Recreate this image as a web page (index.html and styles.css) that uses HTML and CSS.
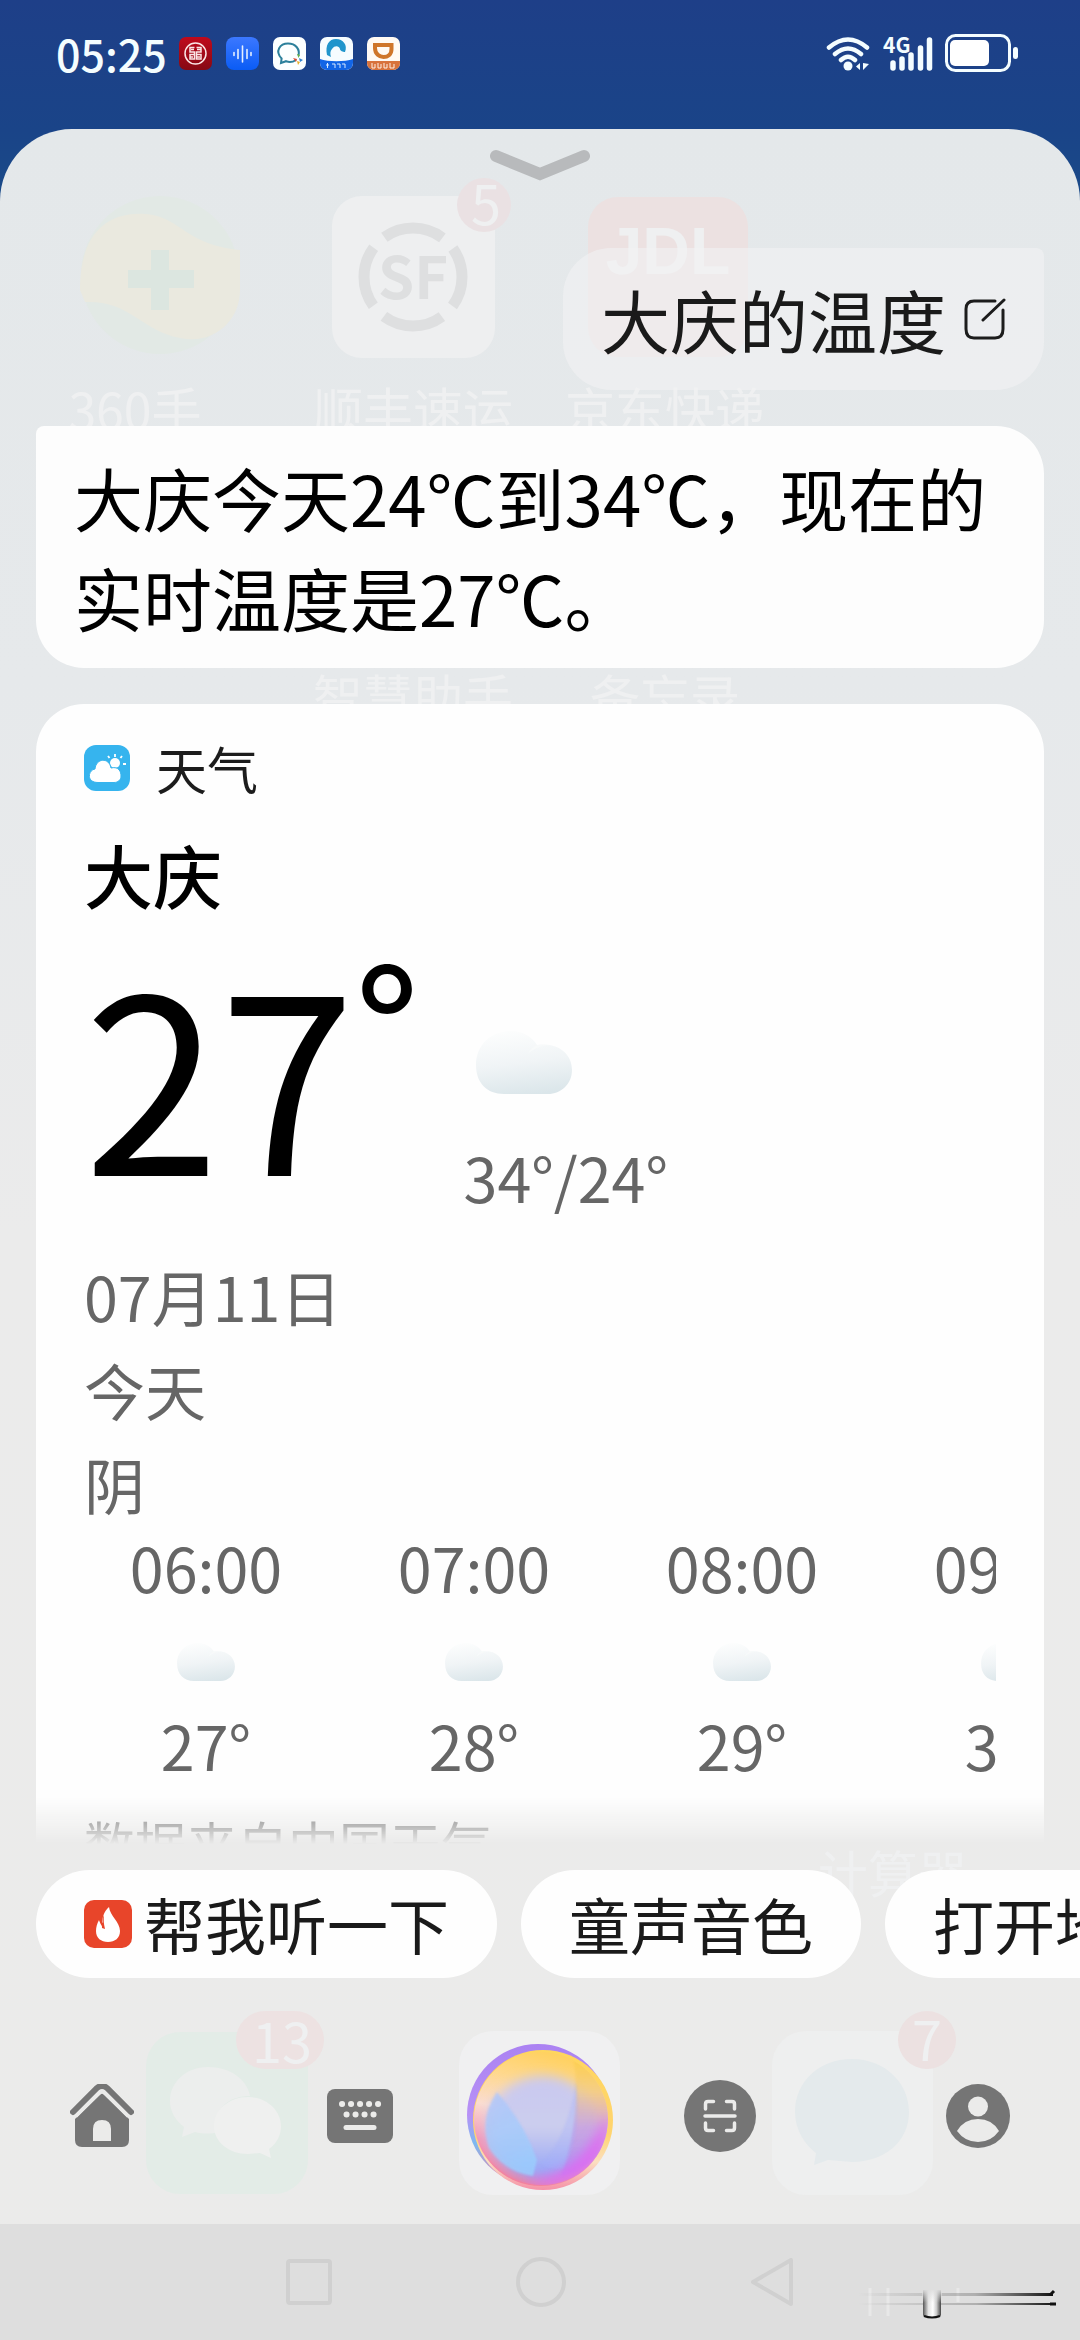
FILE: index.html
```html
<!DOCTYPE html>
<html lang="zh-CN">
<head>
<meta charset="utf-8">
<meta name="viewport" content="width=device-width, initial-scale=1">
<title>大庆的温度</title>
<link rel="stylesheet" href="styles.css">
</head>
<body>
<svg class="defs" width="0" height="0" aria-hidden="true">
  <defs>
    <linearGradient id="cloud-fill" x1="0.4" y1="0" x2="0.6" y2="1">
      <stop offset="0" stop-color="#fcfdfd"/>
      <stop offset="0.5" stop-color="#f0f4f6"/>
      <stop offset="1" stop-color="#dbe6ea"/>
    </linearGradient>
    <symbol id="cloud" viewBox="0 0 96 63">
      <path d="M28 63C11 63 0 52 0 34C0 14 15 0 35 0C47 0 56 6 61 14C81 11 96 22 96 39C96 53 85 63 72 63Z" fill="url(#cloud-fill)"/>
      <path d="M61 14C57 16 54 19 52 23C55 19 66 13 76 15Z" fill="#f8fafa"/>
    </symbol>
  </defs>
</svg>

<header class="status">
  <time class="clock">05:25</time>
  <div class="apps">
    <svg class="app" viewBox="0 0 33 33"><defs><linearGradient id="red" x2="0" y2="1"><stop stop-color="#c00a1c"/><stop offset="1" stop-color="#860914"/></linearGradient></defs><rect width="33" height="33" rx="7" fill="url(#red)"/><g fill="none" stroke="#fbe6e6" stroke-width="1.5"><circle cx="16.500" cy="16.500" r="10.500"/><path d="M15.500 10.500H11v4.500h4.500v2.500H11V22h4.500V17M17.500 10.500H22v4.500h-4.500v2.500H22V22h-4.500V17M12 12.500h3M18 12.500h4M11 20h3M18 20h3"/></g></svg>
    <svg class="app" viewBox="0 0 33 33"><defs><linearGradient id="blue" x2="0" y2="1"><stop stop-color="#3c78ff"/><stop offset="1" stop-color="#0a5cf5"/></linearGradient></defs><rect width="33" height="33" rx="8" fill="url(#blue)"/><path d="M8 15.500v3M12 12.500v9M16.500 9v16M21 12.500v9M25 15.500v3" stroke="#e4efff" stroke-width="1.600" stroke-linecap="round"/></svg>
    <svg class="app" viewBox="0 0 33 33"><rect width="33" height="33" rx="7" fill="#fcffff"/><path d="M23 23c-3 2-7 2.500-10 1.200L8 26l.6-4.500C1.500 14 7 6.500 15 6.500s12 6 10.500 12" fill="none" stroke="#2c809b" stroke-width="2"/><path d="M24 17l3 1-1.500 3z" fill="#69b345"/><path d="M26 21l4 2-3 2z" fill="#3283cf"/><path d="M20 21l4 1-1 3z" fill="#d84c32"/><path d="M24 24l3 1-2 3z" fill="#e8b027"/></svg>
    <svg class="app" viewBox="0 0 33 33"><rect width="33" height="33" rx="7" fill="#f6fcff"/><path d="M7 18C5 8 9 2 16 2s12 6 9 13c-2 0-5-1-5-3-1-3-5-4-8 0-2 2-2 5-1 8z" fill="#2095cc"/><path d="M0 22c8 3 25 3 33 0v4a7 7 0 0 1-7 7H7a7 7 0 0 1-7-7z" fill="#1265e6"/><path d="M6 28h3M7.500 26v5M12 27h3v4M17 27h3v4M22 27h3v4" fill="none" stroke="#d8eaff"/></svg>
    <svg class="app" viewBox="0 0 33 33"><rect width="33" height="33" rx="7" fill="#fffaf4"/><path d="M8 8h16.500v4c0 6-4 8-8 8s-8.500-3-8.500-9z" fill="none" stroke="#cf762a" stroke-width="4"/><path d="M0 24h33v2a7 7 0 0 1-7 7H7a7 7 0 0 1-7-7z" fill="#d8733c"/><path d="M5 26v5h3v-4M11 26v5h3v-4M17 26v5h3v-4M23 26v5h4v-4" fill="none" stroke="#fff0e4"/></svg>
  </div>
  <div class="signals">
    <svg class="wifi" viewBox="0 0 45 35"><g fill="none" stroke="#f4fdff" stroke-width="4.500" stroke-linecap="round"><path d="M3 11.500q19-16 38 0M9 18q13-11 26 0M15 24q7-6.500 14 0"/></g><circle cx="22" cy="30" r="4.500" fill="#f4fdff"/><path d="M34 27v7l-4-3.500zM37 27v7l6-6z" fill="#f4fdff"/></svg>
    <svg class="cell" viewBox="0 0 50 35"><text x="0" y="17" class="net">4G</text><path d="M10 27v5M19 23v9M28 19v13M37.500 12v20M46.500 4v28" stroke="#f4fdff" stroke-width="5.500" stroke-linecap="round"/></svg>
    <svg class="battery" viewBox="0 0 73 38"><rect x="1.500" y="1.500" width="63" height="35" rx="9" fill="none" stroke="#f4fdff" stroke-width="3"/><rect x="5" y="6" width="39" height="26" rx="5" fill="#fff"/><rect x="68" y="13" width="5" height="12" rx="2.500" fill="#f4fdff"/></svg>
  </div>
</header>

<div class="sheet">
  <svg class="home-screen" viewBox="0 129 1080 2211" aria-hidden="true">
    <circle cx="160" cy="275" r="79" fill="#e2e9e5"/>
    <path d="M80 290C80 230 110 212 145 214C180 216 185 245 240 250V290C240 320 215 345 180 338C140 330 130 300 85 302Z" fill="#eae9df"/>
    <path d="M160 250v60M128 279h66" stroke="#dce6e0" stroke-width="18"/>
    <rect x="332" y="196" width="163" height="162" rx="30" fill="#eeeff0"/>
    <circle cx="413" cy="277" r="49" fill="none" stroke="#dedfe0" stroke-width="11" stroke-dasharray="62 15" stroke-dashoffset="31"/>
    <text x="413" y="299" class="ghost sf">SF</text>
    <circle cx="484" cy="205" r="27" fill="#eae1e3"/>
    <text x="486" y="225" class="ghost count">5</text>
    <rect x="588" y="197" width="160" height="160" rx="30" fill="#ece1e1"/>
    <text x="668" y="274" class="ghost jdl">JDL</text>
    <text x="135" y="430" class="ghost label">360手</text>
    <text x="413" y="430" class="ghost label">顺丰速运</text>
    <text x="665" y="430" class="ghost label">京东快递</text>
    <text x="413" y="717" class="ghost label">智慧助手</text>
    <text x="665" y="717" class="ghost label">备忘录</text>
    <text x="893" y="1893" class="ghost label">计算器</text>
    <rect x="146" y="2032" width="162" height="162" rx="34" fill="#e3ece7"/>
    <path d="M208 2067c-22 0-38 15-38 34 0 11 6 20 14 26l-2 10 13-5c8 2 17 2 22 0-4-26 14-36 33-36-3-17-20-29-42-29z" fill="#eceeed"/>
    <path d="M248 2097c-19 0-34 13-34 29s15 28 34 28l12-1 11 5-2-9c8-6 12-14 12-23 0-16-15-29-33-29z" fill="#eff0ef"/>
    <rect x="236" y="2011" width="88" height="58" rx="29" fill="#ede2e2"/>
    <text x="282" y="2063" class="ghost count">13</text>
    <rect x="459" y="2031" width="161" height="164" rx="34" fill="#f0f0f1"/>
    <rect x="772" y="2031" width="161" height="164" rx="34" fill="#eeefef"/>
    <path d="M852 2059c-33 0-57 23-57 53 0 17 9 32 21 41l-2 12 14-5 24 2c33 0 57-21 57-50s-24-53-57-53z" fill="#e4eaec"/>
    <circle cx="927" cy="2040" r="29" fill="#ece1e1"/>
    <text x="927" y="2061" class="ghost count">7</text>
  </svg>

  <button class="collapse" aria-label="收起">
    <svg class="chevron" viewBox="0 0 102 32"><path d="M7 7L51 25L95 7" fill="none" stroke="#b8babc" stroke-width="12" stroke-linecap="round"/></svg>
  </button>

  <main class="talk">
    <div class="bubble ask">
      <span>大庆的温度</span>
      <button class="edit" aria-label="编辑"><svg viewBox="0 0 42 42"><path d="M31 3H10Q2 3 2 11V31Q2 40 10 40H31Q39 40 39 31V12M40 2L19 22" fill="none" stroke="#1c1c1c" stroke-width="3" stroke-linecap="round"/></svg></button>
    </div>
    <p class="bubble reply">大庆今天24℃到34℃，现在的实时温度是27℃。</p>

    <section class="weather">
      <div class="source">
        <svg class="source-icon" viewBox="0 0 46 46"><rect width="46" height="46" rx="12" fill="#36b4ee"/><circle cx="31" cy="18" r="5" fill="#fff"/><path d="M31 9v3M38 11l-1.500 2M24 11l1.500 2M42 19h-3" stroke="#fff" stroke-width="1.800"/><path d="M14 37.500C2 37.500 4 25 11 24C12 13 25 12 27 23C35 21 37 27 37 31C37 35 34 37.500 30 37.500Z" fill="#fff" stroke="#36b4ee"/></svg>
        <span>天气</span>
      </div>
      <h1 class="city">大庆</h1>
      <div class="current">
        <div class="now">27<span class="degree">°</span></div>
        <div class="range">
          <svg class="cloud" viewBox="0 0 96 63"><use href="#cloud"/></svg>
          <span>34°/24°</span>
        </div>
      </div>
      <div class="day">
        <div>07月11日</div>
        <div>今天</div>
        <div>阴</div>
      </div>
      <ul class="hours">
        <li><span>06:00</span><svg class="small-cloud" viewBox="0 0 96 63"><use href="#cloud"/></svg><span>27°</span></li>
        <li><span>07:00</span><svg class="small-cloud" viewBox="0 0 96 63"><use href="#cloud"/></svg><span>28°</span></li>
        <li><span>08:00</span><svg class="small-cloud" viewBox="0 0 96 63"><use href="#cloud"/></svg><span>29°</span></li>
        <li><span>09:00</span><svg class="small-cloud" viewBox="0 0 96 63"><use href="#cloud"/></svg><span>30°</span></li>
      </ul>
      <p class="credit">数据来自中国天气</p>
    </section>
  </main>

  <div class="chips">
    <button class="chip"><svg class="flame" viewBox="0 0 48 48"><rect width="48" height="48" rx="10" fill="#e8452a"/><path d="M25 7C26 16 36 22 36 31C36 38 31 42 24 42C17 42 12 38 12 31C12 27 13 24 15 20C16 23 17 25 19 27C17 19 20 11 25 7Z" fill="#fff"/><path d="M15 20Q18 23 18 28L21 29Q19 21 20 15Q18 18 19 23Z" fill="#e8452a"/></svg>帮我听一下</button>
    <button class="chip">童声音色</button>
    <button class="chip">打开地图</button>
  </div>

  <nav class="tools">
    <button class="tool first" aria-label="主页"><svg width="64" height="64" viewBox="0 0 64 64"><path d="M3 28L27 4Q32 0 37 4L61 28" fill="none" stroke="#757575" stroke-width="6" stroke-linecap="round"/><path d="M32 9L59 35V56Q59 63 52 63H12Q5 63 5 56V35Z" fill="#757575"/><path d="M6 32.500L29 9.500Q32 7 35 9.500L58 32.500" fill="none" stroke="#ebebea" stroke-width="3"/><path d="M23 57V45Q23 36 32 36T41 45V57Z" fill="#ebebea"/></svg></button>
    <button class="tool" aria-label="键盘"><svg width="66" height="54" viewBox="0 0 66 54"><rect width="66" height="54" rx="8" fill="#757575"/><g stroke="#ebebea" stroke-width="6" stroke-linecap="round"><path d="M15 15h.1M24 15h.1M33 15h.1M42 15h.1M51 15h.1M19.500 25.500h.1M28.500 25.500h.1M37.500 25.500h.1M46.500 25.500h.1"/><path d="M19 38.500H47" stroke-width="5"/></g></svg></button>
    <button class="tool" aria-label="语音"><svg width="146" height="148" viewBox="0 0 146 148">
      <defs>
        <linearGradient id="rim" x1=".4" y1="0" x2=".4" y2="1"><stop stop-color="#ab82f2"/><stop offset=".5" stop-color="#b791f6"/><stop offset=".7" stop-color="#7db9f0"/><stop offset="1" stop-color="#ed7da8"/></linearGradient>
        <linearGradient id="edge" x2="0" y2="1"><stop stop-color="#ffd65c"/><stop offset=".6" stop-color="#ffd470"/><stop offset=".8" stop-color="#fbdfc0"/><stop offset="1" stop-color="#f590a8"/></linearGradient>
        <linearGradient id="ring" x1=".65" y1="0" x2=".4" y2="1"><stop stop-color="#ffd05a"/><stop offset=".25" stop-color="#ffd88c"/><stop offset=".5" stop-color="#fadcd0"/><stop offset=".75" stop-color="#f29aba"/><stop offset="1" stop-color="#f27f9d"/></linearGradient>
        <linearGradient id="core" x2="0" y2="1"><stop stop-color="#c9c8f0"/><stop offset=".5" stop-color="#ccceee"/><stop offset="1" stop-color="#8fa0f8"/></linearGradient>
        <linearGradient id="side" x2="0" y2="1"><stop stop-color="#ffd03f"/><stop offset=".3" stop-color="#f2cb85"/><stop offset=".6" stop-color="#c99bdd"/><stop offset="1" stop-color="#b088f2"/></linearGradient>
        <linearGradient id="wing" x2=".3" y2="1"><stop stop-color="#b4c6f8"/><stop offset="1" stop-color="#9bcdfd"/></linearGradient>
        <clipPath id="ball"><circle cx="75" cy="77" r="66"/></clipPath>
        <filter id="soft" x="-30%" y="-30%" width="160%" height="160%"><feGaussianBlur stdDeviation="6"/></filter>
        <filter id="blend"><feGaussianBlur stdDeviation="1"/></filter>
      </defs>
      <circle cx="71" cy="73" r="71" fill="url(#rim)"/>
      <circle cx="76" cy="78" r="70" fill="url(#edge)"/>
      <circle cx="74" cy="77" r="67" fill="url(#ring)"/>
      <g clip-path="url(#ball)">
        <ellipse cx="76" cy="86" rx="56" ry="52" fill="url(#core)" filter="url(#soft)"/>
        <path d="M106 12Q150 40 144 90Q132 124 94 134Q116 70 106 12Z" fill="url(#side)" opacity=".75" filter="url(#blend)"/>
        <path d="M141 72Q144 126 94 142Q74 146 58 138Q110 138 141 72Z" fill="#dd6cf2" filter="url(#soft)"/>
        <path d="M30 50Q58 82 70 118L66 134Q38 130 22 106Q12 76 30 50Z" fill="url(#wing)" opacity=".85" filter="url(#blend)"/>
        <path d="M109 40Q116 92 96 127Q84 128 74 122Q100 96 109 40Z" fill="#a5b0fa" opacity=".3" filter="url(#blend)"/>
      </g>
    </svg></button>
    <button class="tool" aria-label="扫一扫"><svg width="72" height="72" viewBox="0 0 72 72"><circle cx="36" cy="36" r="36" fill="#757575"/><path d="M21.500 29V24Q21.500 21.500 24 21.500H29.500M42.500 21.500H48Q50.500 21.500 50.500 24V29M21.500 43V48Q21.500 50.500 24 50.500H29.500M42.500 50.500H48Q50.500 50.500 50.500 48V43M21 36H51" fill="none" stroke="#ebebea" stroke-width="3.500" stroke-linecap="round"/></svg></button>
    <button class="tool last" aria-label="我的"><svg width="64" height="64" viewBox="0 0 64 64"><circle cx="32" cy="32" r="32" fill="#757575"/><circle cx="32" cy="22.500" r="10" fill="#ebebea"/><path d="M11 47Q18 35 32 35T53 47Q45 58 32 58T11 47Z" fill="#ebebea"/></svg></button>
  </nav>

  <footer class="system-nav">
    <button class="key" aria-label="最近任务"><svg width="46" height="46" viewBox="0 0 46 46"><rect x="2" y="2" width="42" height="42" rx="2"/></svg></button>
    <button class="key" aria-label="主屏幕"><svg width="50" height="50" viewBox="0 0 50 50"><circle cx="25" cy="25" r="23"/></svg></button>
    <button class="key" aria-label="返回"><svg width="44" height="48" viewBox="0 0 44 48"><path d="M41 2V46L3 24Z"/></svg></button>
    <svg class="mark" viewBox="0 0 204 36" aria-hidden="true">
      <defs>
        <linearGradient id="line"><stop stop-color="#222" stop-opacity="0"/><stop offset=".6" stop-color="#222" stop-opacity=".25"/><stop offset="1" stop-color="#111"/></linearGradient>
        <linearGradient id="tube"><stop stop-color="#555"/><stop offset=".3" stop-color="#e4e4e4"/><stop offset=".55" stop-color="#fff"/><stop offset=".75" stop-color="#ccc"/><stop offset="1" stop-color="#444"/></linearGradient>
        <linearGradient id="tube-fade" x2="0" y2="1"><stop stop-color="#dedede"/><stop offset="1" stop-color="#dedede" stop-opacity="0"/></linearGradient>
      </defs>
      <path d="M16 2V30M34 2V30M104 2V16" stroke="#e8e8e8" stroke-width="3"/>
      <rect x="4" y="7" width="195" height="3" fill="url(#line)"/>
      <rect x="4" y="17" width="197" height="2" fill="url(#line)"/>
      <path d="M196 9L200 5M196 18H202" stroke="#111" stroke-width="3"/>
      <path d="M69 4H87V29Q87 32 78 32T69 29Z" fill="url(#tube)"/>
      <rect x="68" y="3" width="20" height="14" fill="url(#tube-fade)"/>
      <path d="M70 30Q78 33 86 30" fill="none" stroke="#111" stroke-width="2"/>
    </svg>
  </footer>
</div>
</body>
</html>
```
FILE: styles.css
```css
* {
  box-sizing: border-box;
}

body {
  margin: 0;
  height: 100vh;
  display: flex;
  flex-direction: column;
  overflow: hidden;
  background: linear-gradient(#1e3f88, #1a4488 130px, #1a4c88 220px);
  color: #000;
  font-family: "Noto Sans CJK SC", sans-serif;
}

button {
  margin: 0;
  padding: 0;
  border: 0;
  background: none;
  color: inherit;
  font: inherit;
}

svg {
  display: block;
  flex: none;
}

.defs {
  position: absolute;
}

/* Status bar */

.status {
  display: flex;
  align-items: center;
  padding: 29px 62px 52px 56px;
  color: #f4fdff;
}

.clock {
  font-size: 43px;
  font-weight: 500;
  line-height: 48px;
}

.apps,
.signals {
  display: flex;
  align-items: center;
  gap: 14px;
}

.apps {
  margin-left: 12px;
}

.app {
  width: 33px;
  height: 33px;
}

.signals {
  margin-left: auto;
  gap: 12px;
}

.wifi {
  width: 45px;
  height: 35px;
}

.cell {
  width: 50px;
  height: 35px;
}

.net {
  fill: #f4fdff;
  font-size: 21px;
  font-weight: 700;
}

.battery {
  width: 73px;
  height: 38px;
}

/* Assistant sheet over the home screen */

.sheet {
  position: relative;
  flex: 1;
  min-height: 0;
  display: flex;
  flex-direction: column;
  overflow: hidden;
  border-radius: 72px 72px 0 0;
  background: linear-gradient(#e4e8ea, #e6e9eb 25%, #ebebeb 50%, #ebebea);
}

.sheet > * {
  position: relative;
}

.sheet > .home-screen {
  position: absolute;
  top: 0;
  left: 0;
  width: 100%;
}

.ghost {
  fill: #eff0f1;
  text-anchor: middle;
}

.label {
  font-size: 50px;
}

.count {
  font-size: 54px;
}

.sf {
  fill: #dedfe0;
  font-size: 58px;
  font-weight: 700;
}

.jdl {
  font-family: "Liberation Sans", sans-serif;
  font-size: 66px;
  font-weight: 700;
}

.collapse {
  padding: 20px 0 67px;
}

.chevron {
  width: 102px;
  height: 32px;
  margin: 0 auto;
}

/* Conversation */

.talk {
  flex: 1;
  min-height: 0;
  display: flex;
  flex-direction: column;
  gap: 36px;
  padding: 0 36px;
  overflow: hidden;
  -webkit-mask-image: linear-gradient(to top, transparent 6px, #000 54px);
  mask-image: linear-gradient(to top, transparent 6px, #000 54px);
}

.bubble {
  flex: none;
  margin: 0;
  padding: 21px 38px;
  font-size: 69px;
  line-height: 100px;
}

.ask {
  display: flex;
  align-items: center;
  align-self: flex-end;
  gap: 18px;
  border-radius: 48px 8px 48px 48px;
  background: rgba(242, 242, 243, 0.6);
  color: #1a1a1a;
}

.edit svg {
  width: 42px;
  height: 42px;
}

.reply {
  border-radius: 8px 48px 48px 48px;
  background: #fdfdfd;
}

.weather {
  flex: none;
  padding: 40px 48px;
  border-radius: 48px;
  background: #fefefe;
  color: #666;
  font-size: 61px;
}

.source {
  display: flex;
  align-items: center;
  gap: 26px;
  color: #1c1c1c;
  font-size: 51px;
  line-height: 48px;
}

.source-icon {
  width: 46px;
  height: 46px;
}

.city {
  margin: 42px 0 0;
  color: #000;
  font-size: 69px;
  font-weight: 500;
  line-height: 80px;
}

.current {
  display: flex;
  gap: 44px;
  margin-top: 36px;
}

.now {
  display: flex;
  align-items: flex-start;
  color: #000;
  font-size: 244px;
  line-height: 240px;
}

.degree {
  font-size: 168px;
  font-weight: 500;
  line-height: 140px;
}

.range {
  padding-top: 81px;
  line-height: 80px;
}

.cloud {
  width: 96px;
  height: 63px;
  margin: 0 0 43px 12px;
}

.day {
  margin-top: 32px;
  line-height: 94px;
}

.hours {
  display: flex;
  gap: 24px;
  margin: 0;
  padding: 0;
  overflow: hidden;
  list-style: none;
  line-height: 72px;
}

.hours li {
  flex: none;
  width: 244px;
  display: flex;
  flex-direction: column;
  align-items: center;
}

.small-cloud {
  width: 58px;
  height: 38px;
  margin: 40px 0 28px;
}

.credit {
  margin: 32px 0 0;
  font-size: 51px;
  line-height: 60px;
}

/* Suggestions */

.chips {
  display: flex;
  gap: 24px;
  margin-top: 20px;
  padding-left: 36px;
  overflow: hidden;
}

.chip {
  flex: none;
  display: flex;
  align-items: center;
  gap: 12px;
  padding: 10px 48px;
  border-radius: 54px;
  background: #fefefe;
  color: #1a1a1a;
  font-size: 61px;
  line-height: 88px;
}

.flame {
  width: 48px;
  height: 48px;
}

/* Assistant tools */

.tools {
  display: grid;
  grid-template-columns: 1fr 180px 180px 180px 1fr;
  place-items: center;
  padding: 64px 70px 34px;
}

.first {
  justify-self: start;
}

.last {
  justify-self: end;
}

/* System navigation */

.system-nav {
  display: flex;
  align-items: center;
  justify-content: center;
  gap: 184px;
  padding: 33px 0;
  background: #dedede;
}

.key {
  fill: none;
  stroke: #d0d0d0;
  stroke-width: 4px;
  stroke-linejoin: round;
}

.mark {
  position: absolute;
  right: 22px;
  bottom: 18px;
  width: 204px;
  height: 36px;
}
```
